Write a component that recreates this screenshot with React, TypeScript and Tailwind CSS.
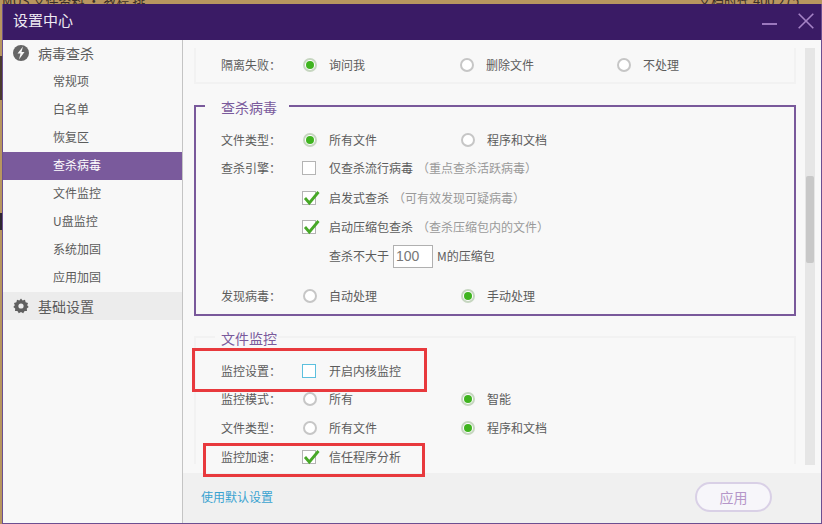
const FONT = "font-['Noto_Sans_CJK_SC','Liberation_Sans',sans-serif]";

function Radio({ on }: { on?: boolean }) {
  return (
    <span className={`flex h-[14px] w-[14px] shrink-0 translate-x-[1px] items-center justify-center rounded-full border-2 bg-white ${on ? "border-[#c6d6c0]" : "border-[#c6c6c6]"}`}>
      {on && <span className="h-[8px] w-[8px] shrink-0 rounded-full bg-[#3fb41f]" />}
    </span>
  );
}

function Check({ on, blue }: { on?: boolean; blue?: boolean }) {
  return (
    <span className={`relative h-[14px] w-[14px] shrink-0 border bg-white ${blue ? "border-[#5cc0de]" : "border-[#b4b4b4]"}`}>
      {on && (
        <svg className="absolute left-[-1px] top-[-1px]" width="18" height="15" viewBox="0 0 18 15">
          <path d="M3 7 L7.3 12 L16.5 1" fill="none" stroke="#47a827" strokeWidth="2.8" />
        </svg>
      )}
    </span>
  );
}

function Opt({ kind, on, blue, label, w }: { kind: "r" | "c"; on?: boolean; blue?: boolean; label: React.ReactNode; w?: string }) {
  return (
    <div className={`flex items-center gap-[13px] ${w ?? ""}`}>
      <span className="flex w-[14px] justify-center">{kind === "r" ? <Radio on={on} /> : <Check on={on} blue={blue} />}</span>
      <span className="whitespace-nowrap">{label}</span>
    </div>
  );
}

function Row({ label, children, mt }: { label?: string; children: React.ReactNode; mt?: string }) {
  return (
    <div className={`flex h-[28px] items-center ${mt ?? ""}`}>
      <span className="w-[81px] shrink-0 whitespace-nowrap">{label}</span>
      {children}
    </div>
  );
}

const Hint = ({ children }: { children: string }) => <span className="pl-[4px] text-[#9a9a9a]">{children}</span>;

function Nav({ label, active }: { label: string; active?: boolean }) {
  return (
    <div className={`flex h-[28px] items-center pb-[2px] pl-[50px] ${active ? "bg-[#7a5a9c] text-white" : ""}`}>{label}</div>
  );
}

export default function App() {
  return (
    <div className={`${FONT} relative h-[524px] w-[822px] overflow-hidden bg-[#b8965f] pl-[2px] pt-[4px] text-[12px] text-[#5c5c5c]`}>
      <span className="absolute left-[2px] top-[-9px] whitespace-nowrap text-[13px] text-[#3c2f28]">MUS 文件资料 · 教程 排 </span>
      <span className="absolute left-[698px] top-[-9px] whitespace-nowrap text-[13px] text-[#3c2f28]">文档时代 400 275</span>
      <div className="absolute left-0 top-[56px] h-[44px] w-[2px] bg-[#4a3a2e]" />
      <div className="absolute left-0 top-[213px] h-[17px] w-[2px] bg-[#2e2730]" />
      <div className="relative flex h-[520px] w-[820px] flex-col border-b border-l border-r border-[#6b4f91] bg-[#f8f8f8]">
        <div className="flex h-[36px] shrink-0 items-center justify-between bg-[#3a1b65] pb-[3px] pl-[10px] pr-[7px] text-[15px] text-[#eeeaf2]">
          <span>设置中心</span>
          <div className="flex items-center gap-[21px]">
            <span className="mt-[6px] h-[2px] w-[15px] bg-[#9b78bd]" />
            <svg width="16" height="16" viewBox="0 0 16 16" className="mt-[1px]">
              <path d="M0.7 0.7 L15.3 15.3 M15.3 0.7 L0.7 15.3" stroke="#a583c6" strokeWidth="1.6" />
            </svg>
          </div>
        </div>
        <div className="flex min-h-0 flex-1">
          <aside className="flex w-[180px] shrink-0 flex-col border-r border-[#c4c4c4] bg-[#f8f8f8]">
            <div className="flex h-[28px] items-center gap-[9px] pl-[10px] text-[14px]">
              <svg width="16" height="16" viewBox="0 0 16 16" className="mt-[-3px]">
                <circle cx="8" cy="8" r="8" fill="#666666" />
                <path d="M10 1.5 L4.5 8.5 L7.5 8.5 L6 14.5 L11.5 7 L8.5 7 Z" fill="#f8f8f8" />
              </svg>
              <span className="mt-[-2px]">病毒查杀</span>
            </div>
            <Nav label="常规项" />
            <Nav label="白名单" />
            <Nav label="恢复区" />
            <Nav label="查杀病毒" active />
            <Nav label="文件监控" />
            <Nav label="U盘监控" />
            <Nav label="系统加固" />
            <Nav label="应用加固" />
            <div className="flex h-[28px] items-center gap-[9px] bg-[#ececec] pl-[10px] text-[14px]">
              <svg width="16" height="16" viewBox="0 0 16 16" className="mt-[-1px]">
                <path d="M8 0.5 L9.6 2.4 L12 1.8 L12.6 4.2 L15 4.9 L14.2 7.2 L15.7 9 L13.8 10.5 L14 13 L11.6 13.1 L10.2 15.2 L8 14 L5.8 15.2 L4.4 13.1 L2 13 L2.2 10.5 L0.3 9 L1.8 7.2 L1 4.9 L3.4 4.2 L4 1.8 L6.4 2.4 Z" fill="#5f5f5f" />
                <circle cx="8" cy="8" r="2.6" fill="#ececec" />
              </svg>
              <span>基础设置</span>
            </div>
          </aside>
          <main className="flex min-w-0 flex-1 flex-col">
            <div className="flex min-h-0 flex-1 bg-[#f8f8f8] pl-[11px] pt-[8px]">
              <div className="w-[602px] shrink-0 overflow-hidden">
                <div className="flex h-[36px] items-center border-b-2 border-l-2 border-r-2 border-[#f2f2f2] pl-[25px]">
                  <Row label="隔离失败：">
                    <Opt kind="r" on label="询问我" w="w-[157px]" />
                    <Opt kind="r" label="删除文件" w="w-[157px]" />
                    <Opt kind="r" label="不处理" />
                  </Row>
                </div>
                <div className="relative mt-[21px] h-[211px] border-2 border-[#79599b] pl-[25px]">
                  <div className="absolute left-[9px] top-[-7px] bg-[#f8f8f8] pl-[16px] pr-[12px] text-[14px] leading-[14px] text-[#7a5a9c]">查杀病毒</div>
                  <Row label="文件类型：" mt="mt-[19px]">
                    <Opt kind="r" on label="所有文件" w="w-[158px]" />
                    <Opt kind="r" label="程序和文档" />
                  </Row>
                  <Row label="查杀引擎：">
                    <Opt kind="c" label={<>仅查杀流行病毒<Hint>（重点查杀活跃病毒）</Hint></>} />
                  </Row>
                  <Row mt="mt-[2px]">
                    <Opt kind="c" on label={<>启发式查杀<Hint>（可有效发现可疑病毒）</Hint></>} />
                  </Row>
                  <Row mt="mt-[1px]">
                    <Opt kind="c" on label={<>启动压缩包查杀<Hint>（查杀压缩包内的文件）</Hint></>} />
                  </Row>
                  <Row mt="mt-[1px]">
                    <div className="ml-[27px] flex items-center whitespace-nowrap">
                      查杀不大于
                      <span className="mx-[4px] flex h-[23px] w-[40px] items-center border border-[#b0b0b0] bg-white pl-[2px] font-['Liberation_Sans'] text-[14px] text-[#777777]">100</span>
                      M的压缩包
                    </div>
                  </Row>
                  <Row label="发现病毒：" mt="mt-[12px]">
                    <Opt kind="r" label="自动处理" w="w-[158px]" />
                    <Opt kind="r" on label="手动处理" />
                  </Row>
                </div>
                <div className="relative mt-[20px] h-[128px] border-2 border-b-0 border-[#f2f2f2] pl-[25px]">
                  <div className="absolute left-[19px] top-[-7px] bg-[#f8f8f8] pl-[6px] pr-[1px] text-[14px] leading-[14px] text-[#7a5a9c]">文件监控</div>
                  <Row label="监控设置：" mt="mt-[19px]">
                    <Opt kind="c" blue label="开启内核监控" />
                  </Row>
                  <Row label="监控模式：">
                    <Opt kind="r" label="所有" w="w-[158px]" />
                    <Opt kind="r" on label="智能" />
                  </Row>
                  <Row label="文件类型：" mt="mt-[1px]">
                    <Opt kind="r" label="所有文件" w="w-[158px]" />
                    <Opt kind="r" on label="程序和文档" />
                  </Row>
                  <Row label="监控加速：" mt="mt-[1px]">
                    <Opt kind="c" on label="信任程序分析" />
                  </Row>
                </div>
              </div>
              <div className="relative ml-[9px] h-[417px] w-[10px] bg-[#e6e6e6]">
                <div className="absolute left-[1px] top-[128px] h-[87px] w-[8px] rounded-[2px] bg-[#c8c8c8]" />
              </div>
            </div>
            <div className="flex h-[50px] shrink-0 items-center justify-between bg-[#f0f0f0] pb-[2px] pl-[18px] pr-[49px]">
              <span className="text-[#3aa3d0]">使用默认设置</span>
              <button className="h-[30px] w-[77px] rounded-full border-2 border-[#d9d0e6] bg-[#f7f6fa] text-[14px] text-[#b596c9]">应用</button>
            </div>
          </main>
        </div>
      </div>
      <div className="absolute left-[192px] top-[348px] h-[44px] w-[235px] border-[3px] border-[#e8393d]" />
      <div className="absolute left-[203px] top-[443px] h-[34px] w-[222px] border-[3px] border-[#e8393d]" />
    </div>
  );
}
